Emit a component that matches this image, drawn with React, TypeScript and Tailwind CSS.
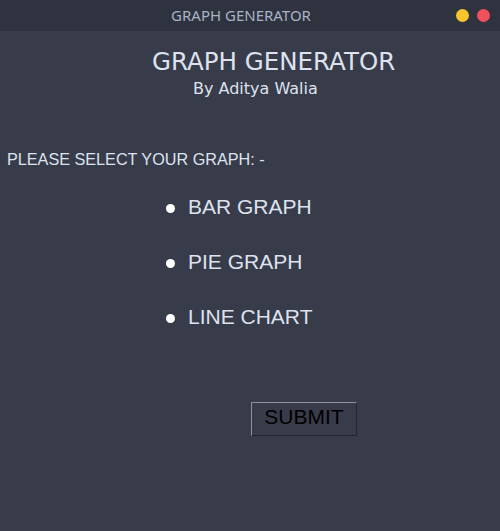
export default function App() {
    const options = ["BAR GRAPH", "PIE GRAPH", "LINE CHART"];

    return (
        <div className="w-[500px] h-[531px] flex flex-col bg-[#383b4a] overflow-hidden">
            <div className="h-[31px] shrink-0 bg-[#2f323f] relative flex items-center justify-center pr-[18px]">
                <span className="text-[15px] text-[#a9b3c6] font-['Noto_Sans',sans-serif]">GRAPH GENERATOR</span>
                <div className="absolute right-[10px] top-[9px] flex gap-[8px]">
                    <div className="w-[13px] h-[13px] rounded-full bg-[#f8c52c]" />
                    <div className="w-[13px] h-[13px] rounded-full bg-[#f0505a]" />
                </div>
            </div>

            <div className="flex flex-col font-['DejaVu_Sans',sans-serif] text-[#dde3ee]">
                <h1 className="text-[24.5px] leading-none mt-[19px] ml-[152px]">GRAPH GENERATOR</h1>
                <p className="text-[16px] leading-none mt-[6px] ml-[193px]">By Aditya Walia</p>
            </div>

            <p className="font-['Liberation_Sans',sans-serif] text-[16.2px] leading-none text-[#dde3ee] ml-[7px] mt-[54px]">
                PLEASE SELECT YOUR GRAPH: -
            </p>

            <div className="flex flex-col gap-[33px] ml-[166px] mt-[29px] font-['Liberation_Sans',sans-serif]">
                {options.map((o) => (
                    <label key={o} className="flex items-center gap-[13px] text-[21px] leading-[22px] text-[#dde3ee]">
                        <span className="w-[9px] h-[9px] rounded-full bg-white mt-[3px]" />
                        {o}
                    </label>
                ))}
            </div>

            <div className="ml-[251px] mt-[74px]">
                <button className="w-[106px] h-[34px] pb-[4px] border border-t-[#8d91a0] border-l-[#8d91a0] border-b-[#23252f] border-r-[#23252f] bg-[#383b4a] text-black text-[21px] font-['Liberation_Sans',sans-serif] leading-none">
                    SUBMIT
                </button>
            </div>
        </div>
    );
}
